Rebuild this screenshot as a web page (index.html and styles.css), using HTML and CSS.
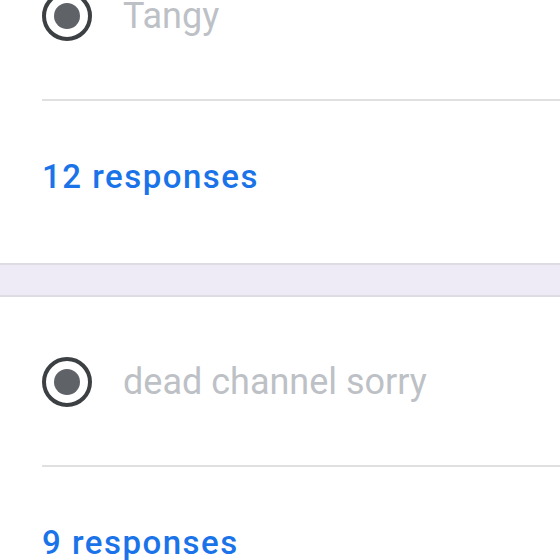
FILE: index.html
```html
<!DOCTYPE html>
<html>
<head>
<meta charset="utf-8">
<link rel="stylesheet" href="styles.css">
</head>
<body>
<div class="card first">
  <div class="option">
    <span class="radio"><span class="dot"></span></span>
    <span class="label">Tangy</span>
  </div>
  <div class="divider"></div>
  <div class="responses">12 responses</div>
</div>
<div class="band"></div>
<div class="card">
  <div class="option">
    <span class="radio"><span class="dot"></span></span>
    <span class="label">dead channel sorry</span>
  </div>
  <div class="divider"></div>
  <div class="responses">9 responses</div>
</div>
</body>
</html>
```
FILE: styles.css
```css
html, body {
  margin: 0;
  padding: 0;
  background: #ffffff;
  overflow: hidden;
}
body {
  width: 560px;
  height: 560px;
  font-family: Roboto, "Noto Sans", sans-serif;
}
.card {
  background: #ffffff;
  padding: 60px 0 66px 42px;
}
.card.first {
  padding-top: 0;
  margin-top: -9px;
}
.option {
  display: flex;
  align-items: center;
  gap: 31px;
  height: 50px;
}
.radio {
  width: 50px;
  height: 50px;
  box-sizing: border-box;
  border: 4px solid #3c4043;
  border-radius: 50%;
  display: flex;
  align-items: center;
  justify-content: center;
  flex: none;
}
.dot {
  width: 26px;
  height: 26px;
  border-radius: 50%;
  background: #5f6368;
}
.label {
  font-size: 36px;
  color: #bdc1c6;
  line-height: 40px;
}
.divider {
  margin-top: 58px;
  height: 2px;
  background: #e0e0e0;
}
.responses {
  margin-top: 56px;
  font-size: 33px;
  letter-spacing: 1.5px;
  line-height: 40px;
  font-weight: 500;
  color: #1a73e8;
}
.band {
  height: 30px;
  background: #eeebf7;
  border-top: 2px solid #dcdce2;
  border-bottom: 2px solid #dcdce2;
}
```
